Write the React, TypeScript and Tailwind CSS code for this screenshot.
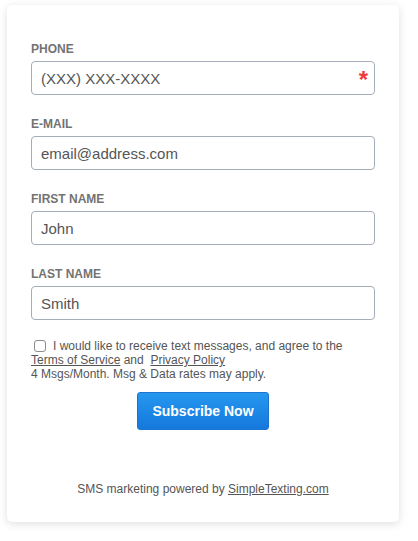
import React from 'react'

const fields = [
  { label: 'PHONE', placeholder: '(XXX) XXX-XXXX', required: true },
  { label: 'E-MAIL', placeholder: 'email@address.com' },
  { label: 'FIRST NAME', placeholder: 'John' },
  { label: 'LAST NAME', placeholder: 'Smith' },
]

export default function App() {
  return (
    <div className="min-h-[541px] bg-white px-[7px] pt-[5px]" style={{ fontFamily: '"Liberation Sans", Arial, sans-serif' }}>
      <div className="w-[392px] h-[517px] bg-white rounded-[5px] shadow-[0_2px_8px_rgba(0,0,0,0.13)] px-6 pt-[37px] flex flex-col">
        {fields.map((f) => (
          <div key={f.label} className="mb-[22px]">
            <div className="text-[12px] font-bold leading-[14px] text-[#737373] mb-[5px]">{f.label}</div>
            <div className="relative h-[34px] border border-[#a6adba] rounded-[4px] flex items-center px-[9px]">
              <span className="text-[15px] text-[#555] leading-none">{f.placeholder}</span>
              {f.required && (
                <span className="absolute right-[6px] top-[6px] text-[#f03a3a] text-[24px] font-bold leading-none">*</span>
              )}
            </div>
          </div>
        ))}
        <div className="-mt-[3px] text-[12px] leading-[14px] text-[#555]">
          <div className="flex items-center">
            <span className="ml-[3px] mr-[7px] w-[12px] h-[12px] border border-[#8a8a8a] rounded-[3px] bg-white inline-block" />
            <span>I would like to receive text messages, and agree to the</span>
          </div>
          <div>
            <span className="underline">Terms of Service</span> and&nbsp; <span className="underline">Privacy Policy</span>
          </div>
          <div>4 Msgs/Month. Msg &amp; Data rates may apply.</div>
        </div>
        <div className="flex justify-center mt-[11px]">
          <button className="w-[132px] h-[38px] rounded-[3px] bg-gradient-to-b from-[#2598ef] to-[#1678dc] border border-[#1a74d0] text-white text-[14px] font-bold">
            Subscribe Now
          </button>
        </div>
        <div className="mt-[50px] text-center text-[12px] text-[#555]">
          SMS marketing powered by <span className="underline">SimpleTexting.com</span>
        </div>
      </div>
    </div>
  )
}
